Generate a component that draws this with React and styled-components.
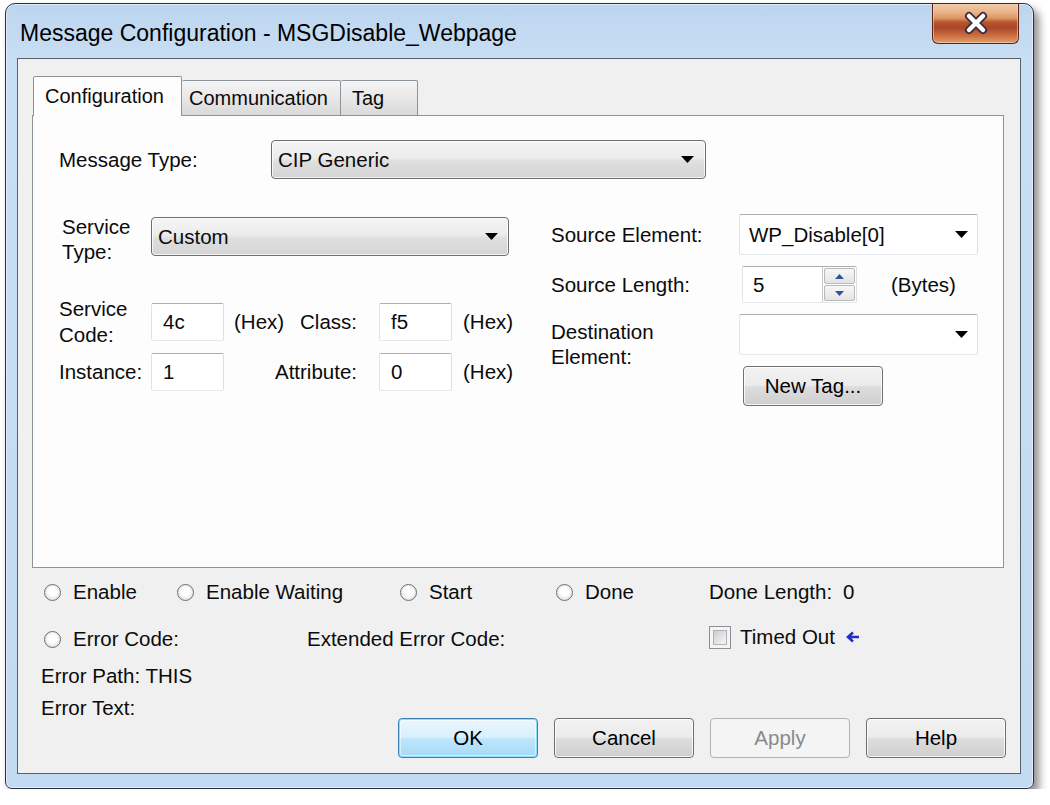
import React from "react";
import styled, { createGlobalStyle } from "styled-components";

const GlobalStyle = createGlobalStyle`
  html, body { margin: 0; padding: 0; background: #ffffff; }
  body { font-family: "Liberation Sans", Arial, sans-serif; color: #0b0b0b; }
  * { box-sizing: border-box; }
`;

const FS = 20.5;

// window chrome
const Window = styled.div`
  margin: 3px 0 0 5px;
  width: 1029px;
  height: 786px;
  display: flex;
  flex-direction: column;
  border: 1px solid #26313c;
  border-radius: 10px 10px 7px 7px;
  background: linear-gradient(to bottom, #bcd5ef 0px, #c8def4 56px, #c2daf2 100%);
  box-shadow: 5px 6px 9px rgba(0, 0, 0, 0.45), inset 0 0 0 1px rgba(255, 255, 255, 0.55);
  overflow: hidden;
`;

const TitleBar = styled.div`
  height: 54px;
  display: flex;
  align-items: flex-start;
  flex-shrink: 0;
`;

const Title = styled.div`
  padding: 16px 0 0 14px;
  font-size: 23px;
  line-height: 26px;
  color: #000;
  white-space: nowrap;
`;

const CloseButton = styled.div`
  margin: -1px 14px 0 auto;
  width: 87px;
  height: 41px;
  display: flex;
  align-items: center;
  justify-content: center;
  border: 1px solid #5a2316;
  border-top: none;
  border-radius: 0 0 6px 6px;
  background: linear-gradient(
    to bottom,
    #f1cda9 0%,
    #e9b68c 22%,
    #dd9462 38%,
    #b9552d 48%,
    #a9472a 62%,
    #c76b3f 80%,
    #e39f6f 100%
  );
  box-shadow: inset 0 0 0 1px rgba(255, 220, 190, 0.55);
`;

const Client = styled.div`
  margin: 0 12px 0 11px;
  height: 716px;
  flex-shrink: 0;
  border: 1px solid #56616c;
  background: #f0f0f0;
  padding-top: 17px;
  display: flex;
  flex-direction: column;
`;

// tabs
const TabRow = styled.div`
  display: flex;
  align-items: flex-end;
  height: 39px;
  margin-left: 15px;
`;

const Tab = styled.div`
  position: relative;
  width: ${(p) => p.$w}px;
  height: ${(p) => (p.$active ? 40 : 35)}px;
  margin-bottom: ${(p) => (p.$active ? -1 : 0)}px;
  padding-left: ${(p) => p.$pl}px;
  display: flex;
  align-items: center;
  font-size: 20px;
  border: 1px solid #8b939b;
  border-bottom: none;
  border-left-width: ${(p) => (p.$first || p.$active ? 1 : 0)}px;
  border-radius: 2px 2px 0 0;
  background: ${(p) =>
    p.$active ? "#fdfdfd" : "linear-gradient(to bottom, #f4f4f4 0%, #e8e8e8 50%, #d9d9d9 100%)"};
  z-index: ${(p) => (p.$active ? 1 : 0)};
  white-space: nowrap;
`;

const Panel = styled.div`
  margin-left: 14px;
  width: 972px;
  height: 453px;
  flex-shrink: 0;
  border: 1px solid #8b939b;
  background: #fdfdfd;
  padding: 24px 0 0 26px;
`;

const Row = styled.div`
  display: flex;
  align-items: ${(p) => (p.$top ? "flex-start" : "center")};
  height: ${(p) => (p.$h ? `${p.$h}px` : "auto")};
`;

const Label = styled.div`
  font-size: ${FS}px;
  line-height: ${(p) => p.$lh || 24}px;
  width: ${(p) => (p.$w ? `${p.$w}px` : "auto")};
  padding-left: ${(p) => p.$pl || 0}px;
  padding-right: ${(p) => p.$pr || 0}px;
  margin-top: ${(p) => p.$mt || 0}px;
  align-self: ${(p) => (p.$top ? "start" : "center")};
  justify-self: ${(p) => (p.$end ? "end" : "start")};
  grid-column: ${(p) => p.$col || "auto"};
  white-space: nowrap;
  flex-shrink: 0;
`;

const Combo = styled.div`
  width: ${(p) => p.$w}px;
  height: ${(p) => p.$h || 39}px;
  display: flex;
  align-items: center;
  justify-content: space-between;
  padding: 0 ${(p) => p.$pr || 12}px 0 6px;
  border: 1px solid #6f6f6f;
  border-radius: 4px;
  background: linear-gradient(to bottom, #f5f5f5 0%, #ececec 45%, #dfdfdf 55%, #d4d4d4 100%);
  box-shadow: inset 0 0 0 1px rgba(255, 255, 255, 0.75);
  font-size: ${FS}px;
  flex-shrink: 0;
`;

const EditCombo = styled.div`
  width: 239px;
  height: 41px;
  display: flex;
  align-items: center;
  justify-content: space-between;
  padding: 0 9px 0 9px;
  border: 1px solid;
  border-color: #abadb3 #dbdfe6 #e3e9ef #e2e3ea;
  border-radius: 2px;
  background: #ffffff;
  font-size: ${FS}px;
`;

const Columns = styled.div`
  display: flex;
  margin-top: 35px;
`;

const LeftCol = styled.div`
  width: 492px;
  padding-top: 3px;
  flex-shrink: 0;
`;

const FieldGrid = styled.div`
  margin-top: 47px;
  display: grid;
  grid-template-columns: 92px 73px 79px 76px 73px auto;
  grid-template-rows: 38px 38px;
  row-gap: 12px;
  align-items: center;
`;

const TextBox = styled.div`
  width: ${(p) => p.$w || 73}px;
  height: 38px;
  display: flex;
  align-items: center;
  padding-left: 11px;
  border: 1px solid;
  border-color: #abadb3 #dbdfe6 #e3e9ef #e2e3ea;
  border-radius: 2px;
  background: #ffffff;
  font-size: ${FS}px;
`;

const Unit = styled.div`
  font-size: ${FS}px;
  padding-left: ${(p) => p.$pl || 0}px;
  margin-left: ${(p) => p.$ml || 0}px;
  white-space: nowrap;
`;

const RightGrid = styled.div`
  display: grid;
  grid-template-columns: 188px 239px;
  grid-template-rows: 41px 37px 41px 40px;
  row-gap: 11px;
  align-items: center;
`;

const Spin = styled.div`
  margin-left: 3px;
  width: 115px;
  height: 37px;
  display: flex;
  border: 1px solid;
  border-color: #abadb3 #dbdfe6 #e3e9ef #e2e3ea;
  border-radius: 2px;
  background: #ffffff;
  font-size: ${FS}px;
`;

const SpinValue = styled.div`
  flex: 1;
  display: flex;
  align-items: center;
  padding-left: 10px;
`;

const SpinButtons = styled.div`
  width: 34px;
  display: flex;
  flex-direction: column;
  padding: 1px;
  gap: 1px;
  border-left: 1px solid #c9c9c9;
`;

const SpinHalf = styled.div`
  flex: 1;
  display: flex;
  align-items: center;
  justify-content: center;
  border: 1px solid #b9b9b9;
  border-radius: 2px;
  background: linear-gradient(to bottom, #f7f7f7, #e4e4e4);
`;

const PushButton = styled.div`
  width: ${(p) => p.$w || 140}px;
  height: 40px;
  display: flex;
  align-items: center;
  justify-content: center;
  margin-left: ${(p) => p.$ml || 0}px;
  border: 1px solid ${(p) => (p.$kind === "disabled" ? "#adb2b5" : p.$kind === "default" ? "#3c7fb1" : "#707070")};
  border-radius: 4px;
  font-size: ${FS}px;
  color: ${(p) => (p.$kind === "disabled" ? "#8a8a8a" : "#000")};
  background: ${(p) =>
    p.$kind === "disabled"
      ? "#f4f4f4"
      : p.$kind === "default"
      ? "linear-gradient(to bottom, #eaf6fd 0%, #d9f0fc 48%, #bee6fd 52%, #a7d9f5 100%)"
      : "linear-gradient(to bottom, #f2f2f2 0%, #ebebeb 48%, #dddddd 52%, #cfcfcf 100%)"};
  box-shadow: ${(p) =>
    p.$kind === "default"
      ? "inset 0 0 0 1px #8fdcf8, inset 0 0 0 2px rgba(255,255,255,0.5)"
      : p.$kind === "disabled"
      ? "none"
      : "inset 0 0 0 1px rgba(255,255,255,0.8)"};
  flex-shrink: 0;
`;

// status area
const Status = styled.div`
  padding: 12px 14px 0 24px;
  display: flex;
  flex-direction: column;
`;

const StatusGrid = styled.div`
  display: grid;
  grid-template-columns: ${(p) => p.$cols};
  height: 24px;
  margin-top: ${(p) => p.$mt || 0}px;
  align-items: center;
  font-size: ${FS}px;
`;

const Item = styled.div`
  display: flex;
  align-items: center;
  gap: ${(p) => p.$gap || 12}px;
  margin-top: ${(p) => p.$mt || 0}px;
  white-space: nowrap;
`;

const Radio = styled.div`
  margin-left: 2px;
  width: 17px;
  height: 17px;
  border-radius: 50%;
  border: 1px solid #6e6e6e;
  background: radial-gradient(circle at 50% 45%, #ffffff 35%, #e6e6e6 70%, #cfcfcf 100%);
  flex-shrink: 0;
`;

const Check = styled.div`
  width: 22px;
  height: 23px;
  padding: 3px;
  border: 1px solid #8e8f8f;
  background: #f4f4f4;
  flex-shrink: 0;

  > div {
    width: 100%;
    height: 100%;
    border: 1px solid #aeb3b9;
    background: linear-gradient(135deg, #c9ccd1 0%, #e3e4e6 55%, #f6f6f6 100%);
  }
`;

const IconSlot = styled.span`
  display: flex;
  margin-left: ${(p) => p.$ml || 0}px;
`;

const InfoLine = styled.div`
  font-size: ${FS}px;
  line-height: 24px;
  margin-top: ${(p) => p.$mt || 0}px;
  margin-left: -1px;
`;

const ButtonRow = styled.div`
  display: flex;
  justify-content: flex-end;
  gap: 16px;
  margin-top: -2px;
`;

const DownArrow = () => (
  <svg width="13" height="7" viewBox="0 0 13 7">
    <path d="M0 0 H13 L6.5 7 Z" fill="#000" />
  </svg>
);

const SpinArrow = ({ up }) => (
  <svg width="9" height="5" viewBox="0 0 9 5">
    <path d={up ? "M0 5 H9 L4.5 0 Z" : "M0 0 H9 L4.5 5 Z"} fill="#2f5596" />
  </svg>
);

const CloseX = () => (
  <svg width="30" height="24" viewBox="0 0 30 24">
    <path d="M8 5 L22 19 M22 5 L8 19" stroke="#3b2c3c" strokeWidth="8" strokeLinecap="round" />
    <path d="M8 5 L22 19 M22 5 L8 19" stroke="#ffffff" strokeWidth="4.5" strokeLinecap="round" />
  </svg>
);

const BackArrow = () => (
  <svg width="14" height="14" viewBox="0 0 14 14">
    <path d="M13 7 H3 M7 2.5 L2 7 L7 11.5" stroke="#1f2fc2" strokeWidth="2.6" fill="none" />
  </svg>
);

export default function App() {
  return (
    <>
      <GlobalStyle />
      <Window>
        <TitleBar>
          <Title>Message Configuration - MSGDisable_Webpage</Title>
          <CloseButton>
            <CloseX />
          </CloseButton>
        </TitleBar>

        <Client>
          <TabRow>
            <Tab $active $w={149} $pl={11}>Configuration</Tab>
            <Tab $w={159} $pl={7}>Communication</Tab>
            <Tab $w={77} $pl={11}>Tag</Tab>
          </TabRow>

          <Panel>
            <Row>
              <Label $w={212}>Message Type:</Label>
              <Combo $w={435} $pr={11}>
                <span>CIP Generic</span>
                <DownArrow />
              </Combo>
            </Row>

            <Columns>
              <LeftCol>
                <Row $top $h={39}>
                  <Label $w={92} $pl={3} $lh={25} $mt={5}>
                    Service
                    <br />
                    Type:
                  </Label>
                  <Combo $w={358} $pr={10}>
                    <span>Custom</span>
                    <DownArrow />
                  </Combo>
                </Row>

                <FieldGrid>
                  <Label $lh={26}>
                    Service
                    <br />
                    Code:
                  </Label>
                  <TextBox>4c</TextBox>
                  <Unit $pl={10}>(Hex)</Unit>
                  <Label $end $pr={22}>Class:</Label>
                  <TextBox>f5</TextBox>
                  <Unit $pl={11}>(Hex)</Unit>

                  <Label>Instance:</Label>
                  <TextBox>1</TextBox>
                  <Label $end $pr={22} $col="3 / span 2">Attribute:</Label>
                  <TextBox>0</TextBox>
                  <Unit $pl={11}>(Hex)</Unit>
                </FieldGrid>
              </LeftCol>

              <RightGrid>
                <Label>Source Element:</Label>
                <EditCombo>
                  <span>WP_Disable[0]</span>
                  <DownArrow />
                </EditCombo>

                <Label>Source Length:</Label>
                <Row>
                  <Spin>
                    <SpinValue>5</SpinValue>
                    <SpinButtons>
                      <SpinHalf>
                        <SpinArrow up />
                      </SpinHalf>
                      <SpinHalf>
                        <SpinArrow />
                      </SpinHalf>
                    </SpinButtons>
                  </Spin>
                  <Unit $ml={34}>(Bytes)</Unit>
                </Row>

                <Label $lh={25} $top $mt={5}>
                  Destination
                  <br />
                  Element:
                </Label>
                <EditCombo>
                  <span />
                  <DownArrow />
                </EditCombo>

                <div />
                <PushButton $ml={4}>New Tag...</PushButton>
              </RightGrid>
            </Columns>
          </Panel>

          <Status>
            <StatusGrid $cols="133px 223px 156px 155px auto">
              <Item>
                <Radio />
                Enable
              </Item>
              <Item>
                <Radio />
                Enable Waiting
              </Item>
              <Item>
                <Radio />
                Start
              </Item>
              <Item>
                <Radio />
                Done
              </Item>
              <Item $gap={11}>
                <span>Done Length:</span>
                <span>0</span>
              </Item>
            </StatusGrid>

            <StatusGrid $cols="265px 402px auto" $mt={23}>
              <Item>
                <Radio />
                Error Code:
              </Item>
              <Item>Extended Error Code:</Item>
              <Item $gap={9} $mt={-4}>
                <Check>
                  <div />
                </Check>
                <span>Timed Out</span>
                <IconSlot $ml={2}>
                  <BackArrow />
                </IconSlot>
              </Item>
            </StatusGrid>

            <InfoLine $mt={13}>Error Path: THIS</InfoLine>
            <InfoLine $mt={8}>Error Text:</InfoLine>

            <ButtonRow>
              <PushButton $kind="default">OK</PushButton>
              <PushButton>Cancel</PushButton>
              <PushButton $kind="disabled">Apply</PushButton>
              <PushButton>Help</PushButton>
            </ButtonRow>
          </Status>
        </Client>
      </Window>
    </>
  );
}
